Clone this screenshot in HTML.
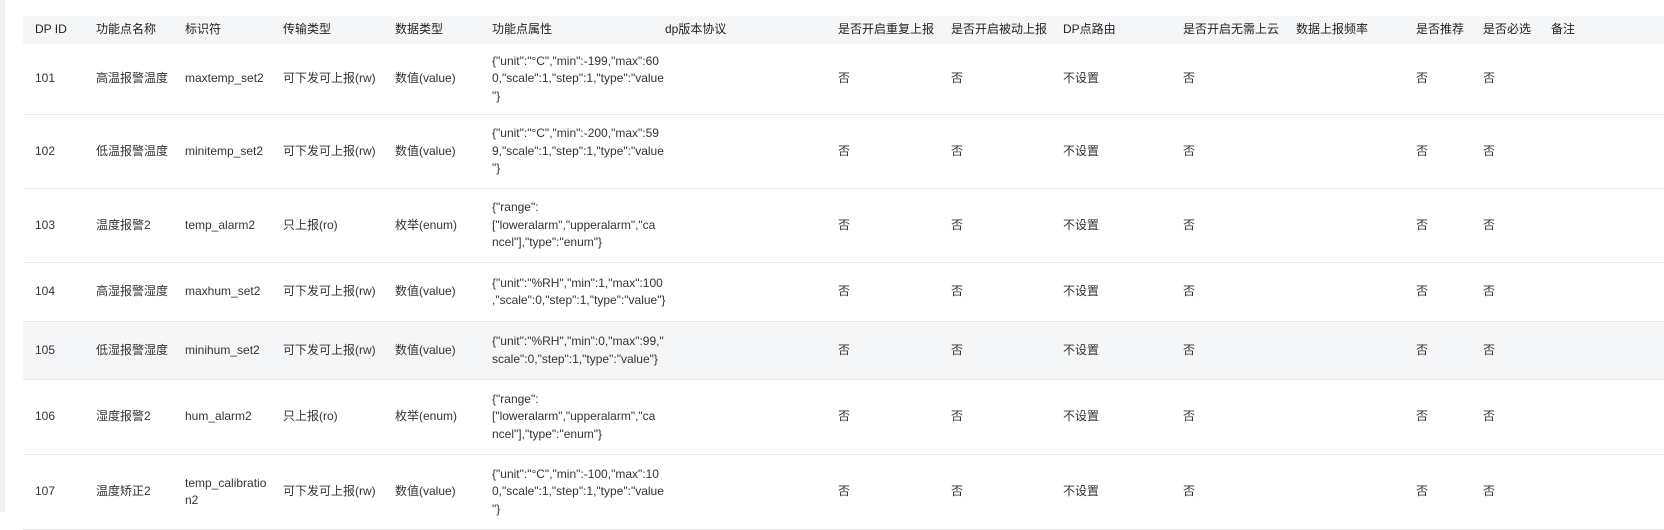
<!DOCTYPE html>
<html><head><meta charset="utf-8"><style>
*{margin:0;padding:0;box-sizing:border-box}
body{width:1664px;height:512px;overflow:hidden;background:#fff;font-family:"Liberation Sans","Noto Sans CJK SC",sans-serif;font-size:12px;color:#333;position:relative}
.strip{position:absolute;left:0;top:0;width:5px;height:512px;background:#eef0f3}
.row{position:absolute;left:23px;right:0;border-bottom:1px solid #e8e8e8}
.hdr{background:#f5f6f8;border-bottom:none;color:#222}
.c{position:absolute;top:0;height:100%;display:flex;align-items:center;line-height:17.5px;white-space:nowrap}
.alt{background:#f5f6f8}
</style></head><body>
<div class="strip"></div>
<div id="t"></div>
<script>
var xs=[35,96,185,283,395,492,665,838,951,1063,1183,1296,1416,1483,1551];
function row(top,h,cells,cls){var d=document.createElement('div');d.className='row '+(cls||'');d.style.top=top+'px';d.style.height=h+'px';
cells.forEach(function(t,i){if(t==null)return;var c=document.createElement('div');c.className='c';c.style.left=(xs[i]-23)+'px';c.innerHTML='<div>'+t+'</div>';d.appendChild(c);});document.body.appendChild(d);}
row(16,28,['DP ID','功能点名称','标识符','传输类型','数据类型','功能点属性','dp版本协议','是否开启重复上报','是否开启被动上报','DP点路由','是否开启无需上云','数据上报频率','是否推荐','是否必选','备注'],'hdr');
function r(top,h,id,name,ident,tr,dt,attr,cls){row(top,h,[id,name,ident,tr,dt,attr,null,'否','否','不设置','否',null,'否','否',null],cls);}
var rw='可下发可上报(rw)',ro='只上报(ro)',vv='数值(value)',en='枚举(enum)';
var en3='{"range":<br>["loweralarm","upperalarm","ca<br>ncel"],"type":"enum"}';
r(44,71,'101','高温报警温度','maxtemp_set2',rw,vv,'{"unit":"°C","min":-199,"max":60<br>0,"scale":1,"step":1,"type":"value<br>"}');
r(115,74,'102','低温报警温度','minitemp_set2',rw,vv,'{"unit":"°C","min":-200,"max":59<br>9,"scale":1,"step":1,"type":"value<br>"}');
r(189,74,'103','温度报警2','temp_alarm2',ro,en,en3);
r(263,59,'104','高湿报警湿度','maxhum_set2',rw,vv,'{"unit":"%RH","min":1,"max":100<br>,"scale":0,"step":1,"type":"value"}');
r(322,58,'105','低湿报警湿度','minihum_set2',rw,vv,'{"unit":"%RH","min":0,"max":99,"<br>scale":0,"step":1,"type":"value"}','alt');
r(380,75,'106','湿度报警2','hum_alarm2',ro,en,en3);
r(455,75,'107','温度矫正2','temp_calibratio<br>n2',rw,vv,'{"unit":"°C","min":-100,"max":10<br>0,"scale":1,"step":1,"type":"value<br>"}');
</script>
</body></html>
